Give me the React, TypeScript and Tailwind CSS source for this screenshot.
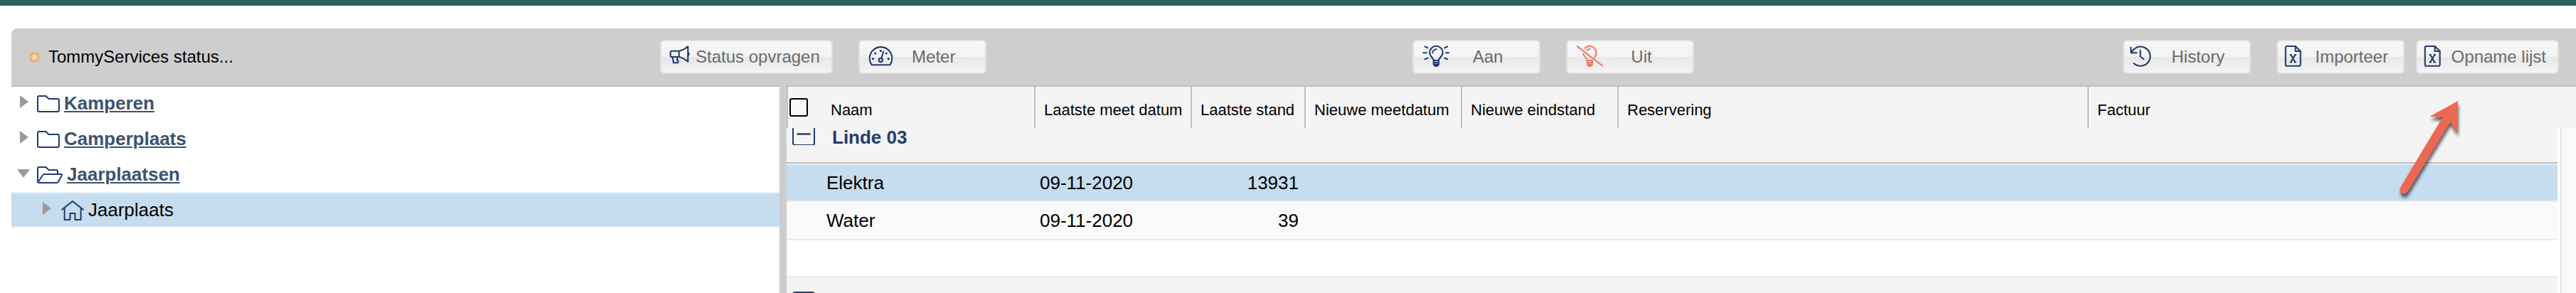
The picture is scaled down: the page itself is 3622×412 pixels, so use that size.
import React from 'react';

interface ToolbarButtonProps {
  icon: React.ReactNode;
  label: string;
}

interface MeterRow {
  name: string;
  date: string;
  value: string;
}

const columns = [
  'Laatste meet datum',
  'Laatste stand',
  'Nieuwe meetdatum',
  'Nieuwe eindstand',
  'Reservering',
  'Factuur',
];

const rows: MeterRow[] = [
  { name: 'Elektra', date: '09-11-2020', value: '13931' },
  { name: 'Water', date: '09-11-2020', value: '39' },
];

const iconProps = {
  className: 'w-10 h-8 shrink-0 overflow-visible',
  viewBox: '0 0 40 32',
  fill: 'none',
  stroke: '#223a6b',
  strokeWidth: 2.1,
  strokeLinecap: 'round' as const,
  strokeLinejoin: 'round' as const,
  'aria-hidden': true,
};

const MegaphoneIcon = () => (
  <svg {...iconProps}>
    <path d="M18.7 7.7H8.5a1.8 1.8 0 0 0-1.8 1.8v4.7A1.8 1.8 0 0 0 8.5 16h10.2zM18.7 7.7c5-.7 8.500-3 12.600-6.400v21.400c-4.100-3.400-7.600-6-12.600-6.700" />
    <path d="M9.7 16.500l1.300 7.800h6.300v-3.600h-1l-.5-4.500" />
    <path d="M32.400 10.800v2.600" />
  </svg>
);

const GaugeIcon = () => (
  <svg {...iconProps}>
    <path d="M10.800 27.300h25.400A15.800 15.800 0 1 0 10.800 27.300z" />
    <circle cx="23.300" cy="20.500" r="2.600" />
    <path d="M24.200 18l3-9.500" />
    <g fill="#223a6b" stroke="none">
      <circle cx="12.500" cy="18.700" r="1.600" />
      <circle cx="15.800" cy="11" r="1.600" />
      <circle cx="23.300" cy="7.700" r="1.600" />
      <circle cx="31.300" cy="11" r="1.600" />
      <circle cx="34.300" cy="18.700" r="1.600" />
    </g>
  </svg>
);

const BulbOnIcon = () => (
  <svg {...iconProps}>
    <path d="M21.700 21c0-3.500-5.500-5.500-5.500-11a9.200 9.200 0 0 1 18.400 0c0 5.500-5.800 7.500-5.800 11z" />
    <path d="M21.700 21v5.500l2 2.400h3.200l2-2.400V21M21.700 24h7M22 26.600h6.500" />
    <path d="M20.300 10.300a5.300 5.300 0 0 1 5.200-5" />
    <path d="M7.300 10.300h4.400M39 10.300h3.900M9.700 1.500l3.800 1.900M41 1.500l-3.800 1.900M9.700 19.200l3.800-1.600M41 19.200l-3.800-1.600" />
  </svg>
);

const BulbOffIcon = () => (
  <svg {...iconProps} stroke="#ef7c68">
    <path d="M18.300 3.800A9.400 9.400 0 0 1 32 16.700" />
    <path d="M16.200 11.700c1 4 5.200 6 5.500 9.300h7" />
    <path d="M21.700 21v5.500l2 2.400h3.200l2-2.400V21M21.700 24h7M22 26.600h6.500" />
    <path d="M21.300 6.700a5.300 5.300 0 0 1 4.200-1.600" />
    <path d="M7.700 1.200L43 28.500" />
  </svg>
);

const HistoryIcon = () => (
  <svg {...iconProps}>
    <path d="M7.300 25A13.600 13.600 0 1 0 4 10.300" />
    <path d="M3.300 2.500v7.800h8.200" />
    <path d="M16.400 6.800v8.700l4.800 3.800" />
  </svg>
);

const ExcelIcon = () => (
  <svg {...iconProps}>
    <path d="M18.500 1H6.500a1.800 1.800 0 0 0-1.800 1.800v24.100a1.800 1.800 0 0 0 1.800 1.800h17.300a1.800 1.800 0 0 0 1.800-1.800V8z" />
    <path d="M18.500 1v7h7.100" />
    <path d="M12 13l6.200 10.500M18.200 13L12 23.500M11.300 13h1.500M17.500 13H19M11.300 23.500h1.500M17.500 23.500H19" />
  </svg>
);

const ToolbarButton: React.FC<ToolbarButtonProps> = ({ icon, label }) => (
  <button
    type="button"
    className="flex h-12 min-w-[180px] items-center gap-0.5 rounded-md border-2 border-[#e0e0e0] bg-[linear-gradient(#f7f7f7,#f3f3f3_50%,#e7e7e7_50%,#f4f4f4)] pl-1.5 pr-4 text-2xl text-[#6b6b6b]"
  >
    {icon}
    <span className="flex-1 whitespace-nowrap text-center">{label}</span>
  </button>
);

const Arrow = ({ open = false }: { open?: boolean }) => (
  <svg className="mr-1 h-[22px] w-[18px] shrink-0" viewBox="0 0 18 22" fill="#9b9b9b" aria-hidden="true">
    <path d={open ? 'M0 4h18L9 16z' : 'M4 0v18l12-9z'} />
  </svg>
);

const treeIconProps = {
  fill: 'none',
  stroke: '#223a6b',
  strokeWidth: 2,
  strokeLinejoin: 'round' as const,
  'aria-hidden': true,
};

const FolderIcon = () => (
  <svg {...treeIconProps} className="h-[26px] w-8 shrink-0" viewBox="0 0 32 26">
    <path d="M1 5a2 2 0 0 1 2-2h9.500l4 4H29a2 2 0 0 1 2 2v14a2 2 0 0 1-2 2H3a2 2 0 0 1-2-2z" />
  </svg>
);

const FolderOpenIcon = () => (
  <svg {...treeIconProps} className="h-[26px] w-9 shrink-0" viewBox="0 0 36 26">
    <path d="M29 12.500V9a2 2 0 0 0-2-2H16.500l-4-4H3a2 2 0 0 0-2 2v18a2 2 0 0 0 2 2h24.500a3 3 0 0 0 2.500-1.500l5-9c.5-1 0-1.500-1-1.500H10.500a3 3 0 0 0-2.500 1.500L1.500 24" />
  </svg>
);

const HouseIcon = () => (
  <svg {...treeIconProps} className="h-[30px] w-[34px] shrink-0" viewBox="0 0 34 30">
    <path d="M2.500 15.200L18 3l15.500 12.200M6.700 12.500V29h7.800v-9h7v9h8.200V12.500" />
  </svg>
);

const CollapseIcon = ({ viewBox }: { viewBox: string }) => (
  <svg className="h-6 w-8" viewBox={viewBox} fill="none" stroke="#263c6b" strokeWidth="2" aria-hidden="true">
    <rect x="1" y="1" width="30" height="30" rx="3" />
    <path d="M7.500 15.500h17" strokeWidth="2.500" strokeLinecap="round" />
  </svg>
);

const Toolbar = () => (
  <div className="grid h-20 grid-cols-[912fr_1058fr_998fr_638fr] items-center rounded-tl-lg bg-[#cecece]">
    <div className="flex items-center gap-[13px] pl-[26px] text-2xl text-black">
      <span className="size-[13px] rounded-[5px] bg-[radial-gradient(#fdd9a4_20%,#f7bd7c_50%,#dd9455_75%)]" />
      <span>TommyServices status...</span>
    </div>
    <div className="flex gap-9">
      <ToolbarButton icon={<MegaphoneIcon />} label="Status opvragen" />
      <ToolbarButton icon={<GaugeIcon />} label="Meter" />
    </div>
    <div className="flex gap-9">
      <ToolbarButton icon={<BulbOnIcon />} label="Aan" />
      <ToolbarButton icon={<BulbOffIcon />} label="Uit" />
    </div>
    <div className="flex justify-end gap-4 pr-6">
      <div className="flex gap-9">
        <ToolbarButton icon={<HistoryIcon />} label="History" />
        <ToolbarButton icon={<ExcelIcon />} label="Importeer" />
      </div>
      <ToolbarButton icon={<ExcelIcon />} label="Opname lijst" />
    </div>
  </div>
);

const Sidebar = () => (
  <nav className="border-t-2 border-[#bfbfbf] text-[26px] leading-[46px]">
    <ul className="-mt-0.5">
      <li className="flex h-[50px] items-center gap-1.5 pl-2">
        <Arrow />
        <FolderIcon />
        <a href="#kamperen" className="font-bold text-[#3b5370] underline">Kamperen</a>
      </li>
      <li className="flex h-[50px] items-center gap-1.5 pl-2">
        <Arrow />
        <FolderIcon />
        <a href="#camperplaats" className="font-bold text-[#3b5370] underline">Camperplaats</a>
      </li>
      <li>
        <div className="flex h-[50px] items-center gap-1.5 pl-2">
          <Arrow open />
          <FolderOpenIcon />
          <a href="#jaarplaatsen" className="font-bold text-[#3b5370] underline">Jaarplaatsen</a>
        </div>
        <ul>
          <li className="flex h-[50px] items-center gap-1.5 border-y-2 border-[#e2edf7] bg-[#c6dcef] pl-10 text-black">
            <Arrow />
            <HouseIcon />
            <span>Jaarplaats</span>
          </li>
        </ul>
      </li>
    </ul>
  </nav>
);

const MeterTable = () => (
  <table className="w-full table-fixed border-separate border-spacing-0 border-t-2 border-[#bfbfbf] text-left text-black">
    <colgroup>
      <col className="w-[348px]" />
      <col className="w-[220px]" />
      <col className="w-[160px]" />
      <col className="w-[220px]" />
      <col className="w-[220px]" />
      <col />
      <col />
      <col className="w-[26px]" />
    </colgroup>
    <thead>
      <tr className="h-[58px] bg-[#f4f4f4] text-[22px]">
        <th className="border-l-2 border-[#bfbfbf] p-0 pl-0.5 font-normal">
          <div className="flex items-center gap-8">
            <input
              type="checkbox"
              aria-label="Alles selecteren"
              className="size-[26px] appearance-none rounded-[3px] border-2 border-black bg-[#f7f7f7]"
            />
            <span className="pt-1.5">Naam</span>
          </div>
        </th>
        {columns.map((column) => (
          <th key={column} className="whitespace-nowrap border-l-2 border-[#bfbfbf] p-0 pl-3 pt-1.5 font-normal">
            {column}
          </th>
        ))}
        <th className="p-0" />
      </tr>
    </thead>
    <tbody className="text-[26px]">
      <tr className="h-[50px] bg-[#f4f4f4]">
        <td colSpan={7} className="border-b-2 border-[#bfbfbf] p-0 pl-2 align-top">
          <div className="flex gap-6 font-bold leading-[26px] text-[#263c6b]">
            <button type="button" aria-label="Groep inklappen" className="h-6">
              <CollapseIcon viewBox="0 7 32 24" />
            </button>
            <span>Linde 03</span>
          </div>
        </td>
        {/* scrollbar track */}
        <td
          rowSpan={5}
          className="border-l-4 border-white bg-[#fafafa] p-0 shadow-[inset_2px_0_0_#e6e6e6]"
        />
      </tr>
      {rows.map((row, i) => {
        const cell = i === 0 ? 'border-y-2 border-[#e2edf7] bg-[#c6dcef] p-0' : 'border-b-2 border-[#ebebeb] bg-[#fafafa] p-0';
        return (
          <tr key={row.name} className="h-[54px]">
            <td className={`${cell} pl-14`}>{row.name}</td>
            <td className={`${cell} pl-2`}>{row.date}</td>
            <td className={`${cell} pr-2 text-right`}>{row.value}</td>
            <td className={cell} />
            <td className={cell} />
            <td className={cell} />
            <td className={cell} />
          </tr>
        );
      })}
      <tr className="h-[52px] bg-white">
        <td colSpan={7} className="border-b-2 border-[#ebebeb] p-0" />
      </tr>
      <tr className="h-[70px] bg-[#f4f4f4]">
        <td colSpan={7} className="p-0 pl-2 pt-5 align-top">
          <button type="button" aria-label="Groep inklappen" className="block h-6">
            <CollapseIcon viewBox="0 0 32 24" />
          </button>
        </td>
      </tr>
    </tbody>
  </table>
);

const App: React.FC = () => {
  return (
    <div className="relative flex h-screen flex-col overflow-hidden bg-white font-['Liberation_Sans',Arial,sans-serif]">
      <header className="h-2 shrink-0 bg-[#29625b]" />
      <main className="flex flex-1 flex-col pl-4 pt-8">
        <Toolbar />
        <div className="grid flex-1 grid-cols-[1080fr_10px_2516fr]">
          <Sidebar />
          <div className="bg-[#cdcdcd]" />
          <MeterTable />
        </div>
      </main>
      <svg
        className="pointer-events-none absolute right-[162px] top-[138px] h-[150px] w-[90px] overflow-visible drop-shadow-[1px_5px_2px_rgba(0,0,0,0.6)]"
        viewBox="0 0 90 150"
        fill="#ed6755"
        aria-hidden="true"
      >
        <path d="M86 4L46.300 25.700l18 1.300L5 125.700a5.800 5.800 0 0 0 10.300 6L75.300 33.700l10 15.600z" />
      </svg>
    </div>
  );
};

export default App;
